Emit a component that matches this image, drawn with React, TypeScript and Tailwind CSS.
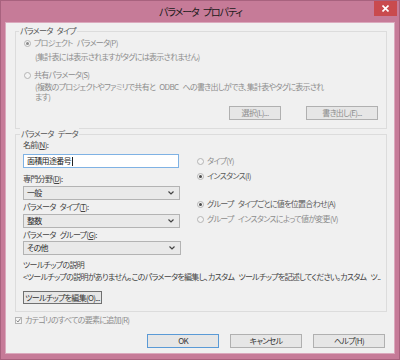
import React from 'react'

const font = "[font-family:'Noto_Sans_CJK_JP','Noto_Sans',sans-serif] [font-feature-settings:'palt']"

function Radio({ checked, label, disabled }: { checked?: boolean; label: string; disabled?: boolean }) {
  return (
    <div className="flex h-[12px] items-center gap-[3px] whitespace-nowrap">
      <span className="flex h-[7px] w-[7px] shrink-0 items-center justify-center rounded-full border border-[#b4b4b4] bg-[#f4f4f4]">
        {checked && <span className={`h-[3px] w-[3px] rounded-full ${disabled ? 'bg-[#8a8a8a]' : 'bg-[#4a4a4a]'}`} />}
      </span>
      <span className={disabled ? 'text-[#8d8d8d]' : 'text-[#5a5a5a]'}>{label}</span>
    </div>
  )
}

function Select({ value, width }: { value: string; width: string }) {
  return (
    <div className={`flex h-[14px] items-center justify-between border border-[#b3b3b3] bg-[#e9e9e9] pl-[3px] pr-[5px] ${width}`}>
      <span className="text-[#2a2a2a]">{value}</span>
      <svg width="6" height="4" viewBox="0 0 6 4">
        <path d="M0.5 0.5 L3 3 L5.5 0.5" fill="none" stroke="#444" strokeWidth="1.2" />
      </svg>
    </div>
  )
}

function Button({ label, width, primary, disabled }: { label: string; width: string; primary?: boolean; disabled?: boolean }) {
  return (
    <div
      className={`flex h-[14px] items-center justify-center whitespace-nowrap border bg-[#e6e6e6] ${width} ${
        primary ? 'border-[#5a9ad6]' : 'border-[#b0b0b0]'
      } ${disabled ? 'text-[#8d8d8d]' : 'text-[#333]'}`}
    >
      {label}
    </div>
  )
}

export default function App() {
  return (
    <div className={`h-[360px] w-[400px] overflow-hidden border border-[#a8627e] bg-[#c67b98] text-[8px] leading-[12px] tracking-[-0.7px] [word-spacing:3px] ${font}`}>
      {/* Title bar */}
      <div className="flex h-[21px] items-start">
        <div className="flex h-[21px] flex-1 items-center justify-center pl-[26px] text-[10px] tracking-[-1.1px] text-[#1a1a1a]">
          パラメータ プロパティ
        </div>
        <div className="mr-[2px] flex h-[15px] w-[23px] items-center justify-center bg-[#c94a4e]">
          <svg width="7" height="7" viewBox="0 0 7 7">
            <path d="M0.5 0.5 L6.5 6.5 M6.5 0.5 L0.5 6.5" stroke="#fff" strokeWidth="1.6" />
          </svg>
        </div>
      </div>

      {/* Client area */}
      <div className="ml-[4px] flex h-[332px] w-[390px] flex-col border border-[#dba9bd] bg-[#f0f0f0] px-[9px] pt-[8px]">
        {/* Group 1 */}
        <div className="relative h-[98px] w-[372px] border border-[#dcdcdc] pl-[8px] pt-[5px]">
          <span className="absolute -top-[7px] left-[3px] bg-[#f0f0f0] px-[1px] text-[#555]">パラメータ タイプ</span>
          <Radio checked disabled label="プロジェクト パラメータ(P)" />
          <div className="mt-[3px] whitespace-nowrap pl-[11px] leading-[10px] text-[#8d8d8d]">(集計表には表示されますがタグには表示されません)</div>
          <div className="mt-[7px]">
            <Radio disabled label="共有パラメータ(S)" />
          </div>
          <div className="mt-[1px] whitespace-nowrap pl-[11px] leading-[10px] text-[#8d8d8d]">
            <div>(複数のプロジェクトやファミリで共有と ODBC への書き出しができ、集計表やタグに表示され</div>
            <div>ます)</div>
          </div>
          <div className="mt-[4px] flex justify-end gap-[25px] pr-[8px]">
            <Button disabled label="選択(L)..." width="w-[52px]" />
            <Button disabled label="書き出し(E)..." width="w-[72px]" />
          </div>
        </div>

        {/* Group 2 */}
        <div className="relative mt-[5px] h-[178px] w-[372px] border border-[#dcdcdc] pl-[7px] pt-[4px]">
          <span className="absolute -top-[7px] left-[4px] bg-[#f0f0f0] px-[1px] text-[#555]">パラメータ データ</span>
          <div className="flex gap-[16px]">
            <div className="flex w-[158px] flex-col text-[#444]">
              <div>名前(<span className="underline">N</span>):</div>
              <div className="mt-[3px] flex h-[14px] w-[156px] items-center border border-[#7fb2e4] bg-white pl-[3px] text-[#222]">
                面積用途番号<span className="ml-[1px] h-[9px] w-px bg-[#222]" />
              </div>
              <div className="mt-[5px]">専門分野(<span className="underline">D</span>):</div>
              <div className="mt-[1px]">
                <Select value="一般" width="w-[157px]" />
              </div>
              <div className="mt-[1px]">パラメータ タイプ(<span className="underline">T</span>):</div>
              <div className="mt-[1px]">
                <Select value="整数" width="w-[157px]" />
              </div>
              <div className="mt-[1px]">パラメータ グループ(<span className="underline">G</span>):</div>
              <div>
                <Select value="その他" width="w-[158px]" />
              </div>
            </div>
            <div className="flex flex-col pt-[16px]">
              <Radio disabled label="タイプ(Y)" />
              <div className="mt-[3px]">
                <Radio checked label="インスタンス(I)" />
              </div>
              <div className="mt-[16px]">
                <Radio checked label="グループ タイプごとに値を位置合わせ(A)" />
              </div>
              <div className="mt-[3px]">
                <Radio disabled label="グループ インスタンスによって値が変更(V)" />
              </div>
            </div>
          </div>
          <div className="mt-[4px] text-[#444]">ツールチップの説明</div>
          <div className="whitespace-nowrap text-[#444]">
            &lt;ツールチップの説明がありません。このパラメータを編集し、カスタム ツールチップを記述してください。カスタム ツ..
          </div>
          <div className="mt-[8px]">
            <div className="flex h-[13px] w-[79px] items-center justify-center whitespace-nowrap border border-[#707070] bg-[#e6e6e6] text-[#333]">
              ツールチップを編集(O)...
            </div>
          </div>
        </div>

        {/* Checkbox */}
        <div className="mt-[1px] flex h-[12px] items-center gap-[3px] pt-[2px]">
          <span className="flex h-[7px] w-[7px] items-center justify-center border border-[#b4b4b4] bg-[#f4f4f4]">
            <svg width="5" height="5" viewBox="0 0 5 5">
              <path d="M0.5 2.5 L2 4 L4.5 0.5" fill="none" stroke="#888" strokeWidth="1" />
            </svg>
          </span>
          <span className="text-[#8d8d8d]">カテゴリのすべての要素に追加(R)</span>
        </div>

        {/* Footer buttons */}
        <div className="mt-[9px] flex justify-end gap-[4px]">
          <Button primary label="OK" width="w-[72px]" />
          <div className="w-[3px]" />
          <Button label="キャンセル" width="w-[72px]" />
          <div className="w-[3px]" />
          <Button label="ヘルプ(H)" width="w-[72px]" />
        </div>
      </div>
    </div>
  )
}
